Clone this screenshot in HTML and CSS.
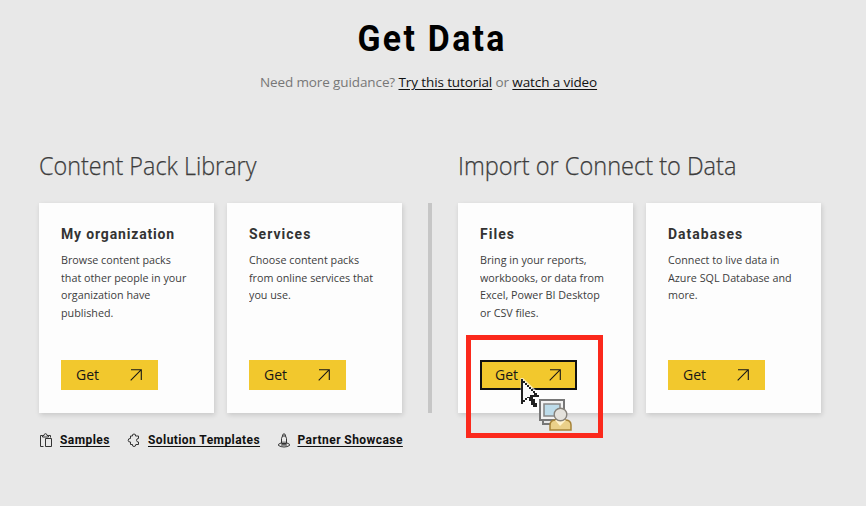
FILE: index.html
```html
<!DOCTYPE html>
<html lang="en">
<head>
<meta charset="utf-8">
<title>Get Data</title>
<link rel="stylesheet" href="styles.css">
</head>
<body>
<svg class="defs" width="0" height="0"><symbol id="arrow" viewBox="0 0 12 12"><path d="M1 .7H11.3V11M11.3.7L.7 11.3" fill="none" stroke="currentColor" stroke-width="1.1"/></symbol></svg>
<header class="intro">
  <h1>Get Data</h1>
  <p><span class="lead">Need more guidance?</span> <a href="#">Try this tutorial</a> or <a href="#">watch a video</a></p>
</header>
<main class="sources">
  <section class="group">
    <h2 class="library">Content Pack Library</h2>
    <div class="cards">
      <article class="card">
        <h3 class="organization">My organization</h3>
        <p>Browse content packs<br>that other people in your<br>organization have<br>published.</p>
        <button class="get"><span>Get</span><svg class="arrow"><use href="#arrow"/></svg></button>
      </article>
      <article class="card">
        <h3>Services</h3>
        <p>Choose content packs<br>from online services that<br>you use.</p>
        <button class="get"><span>Get</span><svg class="arrow"><use href="#arrow"/></svg></button>
      </article>
    </div>
  </section>
  <div class="divider"></div>
  <section class="group">
    <h2 class="import">Import or Connect to Data</h2>
    <div class="cards">
      <article class="card">
        <h3>Files</h3>
        <p>Bring in your reports,<br>workbooks, or data from<br>Excel, Power BI Desktop<br>or CSV files.</p>
        <button class="get focused"><span>Get</span><svg class="arrow"><use href="#arrow"/></svg></button>
        <div class="highlight"></div>
        <svg class="cursor" width="54" height="56" viewBox="0 0 54 56">
          <path d="M2 1V26L8 21L13 31L18 29L14 19H21Z" fill="#fff" stroke="#fff" stroke-opacity=".6" stroke-width="3"/>
          <path d="M1 1H3V3H5V5H7V7H9V9H11V11H13V13H15V15H17V17H19V19H13V21H15V25H17V29H13V27H11V23H9V20H7V22H5V24H3V26H1Z" fill="#222"/>
          <path d="M3 5H5V7H7V9H9V11H11V13H13V15H14V17H10V19H7V20H5V22H3Z" fill="#fafafa"/>
          <path d="M20 22H44V42H20Z" fill="#f2f2f2" stroke="#777" stroke-width="2"/>
          <path d="M24 26H40V38H24Z" fill="#bddcea" stroke="#898989" stroke-width="1.6"/>
          <path d="M23 43V46H32" fill="none" stroke="#777" stroke-width="2"/>
          <path d="M30 52V47Q30 42 36 42H45Q51 42 51 47V52Z" fill="#ead08a" stroke="#a58238" stroke-width="1.5"/>
          <path d="M35 42L40 48L46 42Z" fill="#fff3ce"/>
          <circle cx="40.5" cy="36.5" r="6.3" fill="#e4e2dc" stroke="#85817a" stroke-width="1.4"/>
        </svg>
      </article>
      <article class="card">
        <h3>Databases</h3>
        <p>Connect to live data in<br>Azure SQL Database and<br>more.</p>
        <button class="get"><span>Get</span><svg class="arrow"><use href="#arrow"/></svg></button>
      </article>
    </div>
  </section>
</main>
<nav class="links">
  <a class="samples" href="#"><svg viewBox="0 0 14 15"><path d="M4.500 13.500H1.500V2.500H3.500M9.500 2.500H11.500V4.500M3.500 4V2.500H5Q5 .7 6.500.7T8 2.500H9.500V4ZM6.500 5.500H12.500V13.500H6.500Z"/></svg><span>Samples</span></a>
  <a class="templates" href="#"><svg viewBox="0 0 14 15"><path d="M3.500 3H5.500Q5 1 7 1T8.500 3H11.500V5.500Q9.500 5.500 9.500 7.300T11.500 9V11.500H8.800Q9 13.500 7 13.500T5.500 11.500H3.500V9Q1.200 9.300 1.200 7.300T3.500 5.500Z"/></svg><span>Solution Templates</span></a>
  <a class="partners" href="#"><svg viewBox="0 0 14 15"><path d="M5.500 3Q5.500.8 7 .8T8.500 3M5.500 3H8.500L9.500 5.500V10.500H4.500V5.500ZM6 8.500V12M8 8.500V12M4.500 9.700L1.500 11.300V12.500Q4 14 7 14T12.500 12.500V11.300L9.500 9.700M4 12H10"/></svg><span>Partner Showcase</span></a>
</nav>
</body>
</html>
```
FILE: styles.css
```css
* { box-sizing: border-box; }
body { margin: 0; width: 866px; height: 506px; overflow: hidden; background: #e8e8e8; color: #333; font-family: "Open Sans", "Noto Sans", sans-serif; }
h1, h2, h3, p { margin: 0; font-weight: normal; white-space: nowrap; }
.defs { position: absolute; }
.intro { height: 147px; padding-top: 14px; text-align: center; }
h1 { font: bold 37.500px/48px Roboto, sans-serif; color: #000; letter-spacing: 2.600px; padding-right: 2px; transform: scaleX(.9); }
.intro p { margin-top: 10px; padding-right: 9px; font-size: 13.500px; line-height: 20px; letter-spacing: -.11px; color: #777; }
.intro a { color: #111; text-underline-offset: 2px; }
.sources { display: flex; padding-left: 39px; }
.group { width: 363px; }
h2 { height: 56px; font-size: 25px; font-weight: 300; line-height: 37px; color: #3c3c3c; -webkit-text-stroke: .25px #3c3c3c; transform-origin: left; }
.library { transform: scaleX(.935); }
.import { transform: scaleX(.942); }
.cards { display: flex; gap: 13px; }
.card { position: relative; width: 175px; height: 210px; padding: 21px 0 23px 22px; display: flex; flex-direction: column; align-items: flex-start; background: #fdfdfd; box-shadow: 1px 2px 5px rgba(0,0,0,.14); }
h3 { font: bold 15.500px/21px Roboto, sans-serif; letter-spacing: 1.150px; transform: scaleX(.9); transform-origin: left; }
.organization { letter-spacing: .95px; }
.card p { margin-top: 6px; font-size: 11.500px; line-height: 17.500px; color: #3c3c3c; transform: scaleX(.935); transform-origin: left; }
.get { width: 97px; height: 30px; margin-top: auto; padding: 0 16px 0 15px; display: flex; align-items: center; justify-content: space-between; border: 0; background: #f2c82d; color: #171717; font: 14px/20px "Open Sans", sans-serif; }
.arrow { width: 12px; height: 12px; }
.focused { border: 2px solid #111; padding: 0 14px 0 13px; }
.highlight { position: absolute; left: 8px; top: 132px; width: 137px; height: 103px; border: 5px solid #fb291c; }
.cursor { position: absolute; left: 62px; top: 175px; }
.divider { width: 4px; height: 210px; margin: 56px 26px 0 26px; background: #c6c6c6; }
.links { display: flex; margin: 17px 0 0 39px; font: bold 12px/20px Roboto, sans-serif; }
.links a { display: flex; align-items: center; color: #111; text-decoration: none; white-space: nowrap; }
.links span { text-decoration: underline; text-underline-offset: 2px; letter-spacing: .43px; }
.links svg { width: 14px; height: 15px; margin-right: 7px; fill: none; stroke: #333; }
.samples { width: 88px; }
.templates { width: 149.500px; }
.group:last-child .card { z-index: 1; }
.group:last-child .card:first-child { z-index: 2; }
```
